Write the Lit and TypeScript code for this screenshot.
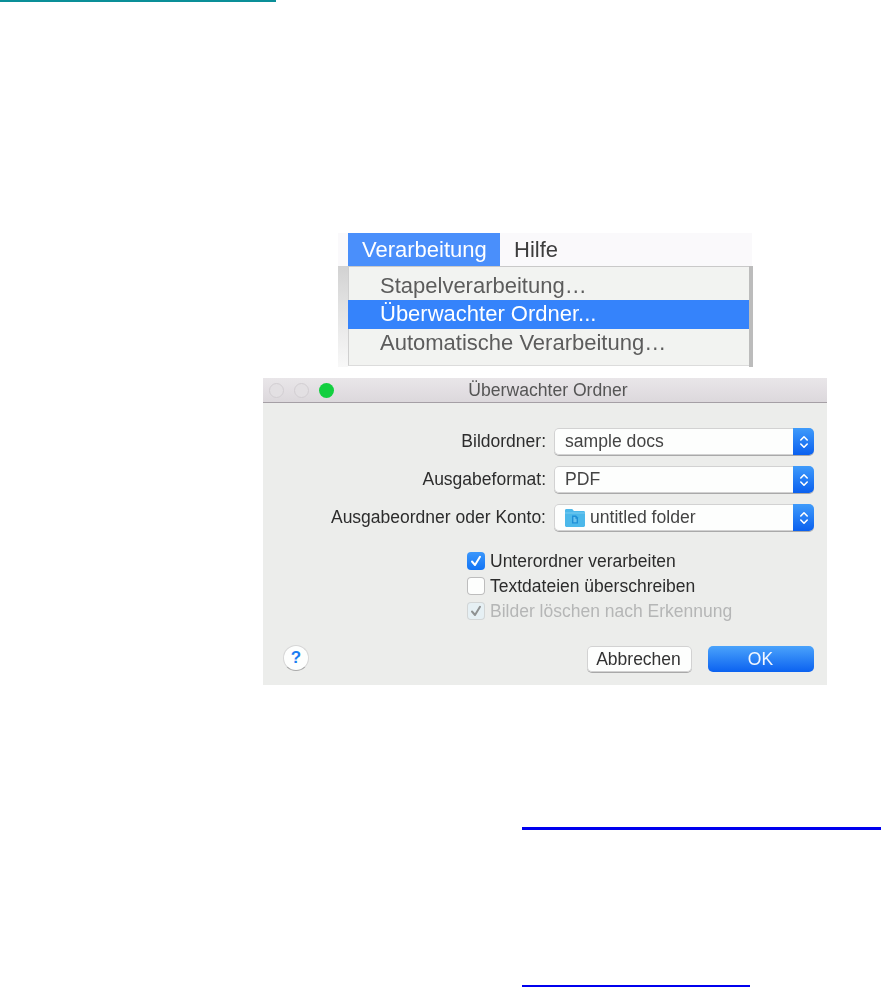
import { LitElement, html, css } from "lit";
import { customElement } from "lit/decorators.js";

const stepper = html`<svg class="stepper-icon" viewBox="0 0 10 16" width="10" height="16" aria-hidden="true"><path d="M1.8 6 5 2.8 8.2 6M1.8 10 5 13.2 8.2 10" fill="none" stroke="#fff" stroke-width="1.6" stroke-linecap="round" stroke-linejoin="round"/></svg>`;
const check = (stroke: string) => html`<svg viewBox="0 0 18 18" width="18" height="18" aria-hidden="true"><path d="M5 9.5 8 13 13 4.8" fill="none" stroke="${stroke}" stroke-width="2" stroke-linecap="round" stroke-linejoin="round"/></svg>`;
const folder = html`<svg class="folder" viewBox="0 0 20 18" width="20" height="18" aria-hidden="true"><path d="M0 1.5C0 .7.5 0 1.3 0h5.4c.6 0 1 .3 1.3.8L8.8 2h9.8c.8 0 1.4.6 1.4 1.4v13.2c0 .8-.6 1.4-1.4 1.4H1.4C.6 18 0 17.4 0 16.6Z" fill="#4cb8ea"/><path d="M0 4h20" stroke="#86d2f4" stroke-width=".8"/><path d="M7 6.5h4l2 2v6H7Z" fill="#1f8fd6"/><path d="M8.4 8h2v1.8h1.2v3.4H8.4Z" fill="#6cc4ee"/></svg>`;

@customElement("app-root")
export class AppRoot extends LitElement {
  static styles = css`
    :host { display: block; width: 881px; height: 987px; overflow: hidden; background: #fff; font-family: "Liberation Sans", Arial, sans-serif; }
    .rule-top { width: 276px; height: 2px; background: #0a8f98; }
    .menu { width: 415px; height: 134px; margin: 231px 0 0 338px; background: #fff; overflow: hidden; }
    .menubar { height: 33px; margin-right: 1px; padding-left: 10px; display: flex; background: #faf9fb; font-size: 22px; color: #3d3d3d; }
    .mb-item { display: flex; align-items: center; padding: 0 14px; height: 33px; }
    .mb-item.active { width: 152px; box-sizing: border-box; background: #4a8ffb; color: #fff; }
    .mb-item span, .li span, .title-text, .lbl, .popup-val span, .chk span, .btn span { filter: blur(.35px); }
    .menu-main { display: flex; height: 101px; }
    .side-l { width: 10px; background: linear-gradient(#d2d2d2, #e4e4e4 45%, #f8f8f8); }
    .side-r { width: 4px; background: #bcbcbc; }
    .list { flex: 1; height: 100px; background: #f2f3f1; border-top: 1px solid #c9c9c9; border-left: 1px solid #cfcfcf; border-bottom: 1px solid #dcdcdc; box-sizing: border-box; padding-top: 4.5px; font-size: 22px; color: #5c5c5c; }
    .li { height: 28.5px; padding-left: 32px; margin-left: -1px; display: flex; align-items: center; }
    .li.sel { background: #3583fb; color: #fff; }

    .dialog { width: 564px; height: 307px; margin: 11px 0 0 263px; background: #ecedeb; color: #2c2c2c; font-size: 17.5px; display: flex; flex-direction: column; }
    .title { height: 25px; box-sizing: border-box; flex: none; display: grid; grid-template-columns: 1fr auto 1fr; align-items: center; padding: 0 6px; background: linear-gradient(#e9e6e9, #dcd8dc); border-bottom: 1px solid #a59fa5; color: #555; }
    .lights { display: flex; gap: 10px; }
    .light { width: 15px; height: 15px; border-radius: 50%; box-sizing: border-box; border: 1px solid #d2ced2; background: #e3e0e3; }
    .light.on { border: 0; background: #12cf3f; }
    .title-text { font-size: 17.6px; padding-left: 6px; }
    .fields { margin-top: 25px; display: grid; grid-template-columns: 283px 260px; column-gap: 8px; row-gap: 11px; }
    .lbl { text-align: right; line-height: 27px; }
    .popup { height: 27px; box-sizing: border-box; display: flex; align-items: stretch; background: #fdfefd; border-radius: 5px; box-shadow: inset 0 0 0 1px #d2d2d2, 0 1px 0 #a9a9a9; overflow: hidden; color: #444; font-size: 17.6px; }
    .popup-val { flex: 1; display: flex; align-items: center; gap: 5px; padding-left: 11px; }
    .stepper { width: 21px; display: flex; align-items: center; justify-content: center; background: linear-gradient(#3f9bfb, #0a60ef); }
    .checks { margin: 21px 0 0 204px; display: flex; flex-direction: column; gap: 7px; }
    .chk { display: flex; align-items: center; gap: 5px; height: 18px; }
    .box { width: 18px; height: 18px; box-sizing: border-box; border-radius: 4px; background: #fdfefd; box-shadow: inset 0 0 0 1px #bdbdbd; }
    .box.on { background: linear-gradient(#3b97fb, #1274f5); box-shadow: none; }
    .box.dis { background: #e6f0f4; box-shadow: inset 0 0 0 1px #d3d6d6; }
    .chk.disabled { color: #b5b6b6; }
    .footer { margin-top: 26px; display: flex; align-items: flex-start; padding: 0 13px 0 20px; }
    .help { width: 26px; height: 26px; margin-top: -1px; box-sizing: border-box; border-radius: 50%; background: #fdfefd; border: 1px solid #d6d6d6; border-bottom-color: #a9a9a9; color: #1a7cf2; font-size: 17px; font-weight: bold; display: flex; align-items: center; justify-content: center; }
    .spacer { flex: 1; }
    .btn { height: 26px; box-sizing: border-box; border-radius: 5px; display: flex; align-items: center; justify-content: center; }
    .cancel { width: 105px; margin-right: 16px; padding-right: 2px; background: #fdfefd; box-shadow: inset 0 0 0 1px #d2d2d2, 0 1px 0 #a9a9a9; color: #333; }
    .ok { width: 106px; padding-right: 1px; background: linear-gradient(#4aa3fb, #0b62f0); color: #f2f7ff; }
    .rule-link { background: #0000ee; margin-left: 522px; }
    .rule-a { width: 359px; height: 3px; margin-top: 142px; }
    .rule-b { width: 228px; height: 2px; margin-top: 155px; }
  `;

  render() {
    const fields: [string, unknown, string][] = [
      ["Bildordner:", "", "sample docs"],
      ["Ausgabeformat:", "", "PDF"],
      ["Ausgabeordner oder Konto:", folder, "untitled folder"],
    ];
    return html`
      <div class="rule-top"></div>
      <div class="menu">
        <div class="menubar">
          <div class="mb-item active"><span>Verarbeitung</span></div>
          <div class="mb-item"><span>Hilfe</span></div>
        </div>
        <div class="menu-main">
          <div class="side-l"></div>
          <div class="list">
            <div class="li"><span>Stapelverarbeitung…</span></div>
            <div class="li sel"><span>Überwachter Ordner...</span></div>
            <div class="li"><span>Automatische Verarbeitung…</span></div>
          </div>
          <div class="side-r"></div>
        </div>
      </div>
      <div class="dialog">
        <div class="title">
          <div class="lights"><i class="light"></i><i class="light"></i><i class="light on"></i></div>
          <div class="title-text">Überwachter Ordner</div>
        </div>
        <div class="fields">
          ${fields.map(([l, ic, v]) => html`
            <div class="lbl">${l}</div>
            <div class="popup"><div class="popup-val">${ic}<span>${v}</span></div><div class="stepper">${stepper}</div></div>
          `)}
        </div>
        <div class="checks">
          <div class="chk"><div class="box on">${check("#fff")}</div><span>Unterordner verarbeiten</span></div>
          <div class="chk"><div class="box"></div><span>Textdateien überschreiben</span></div>
          <div class="chk disabled"><div class="box dis">${check("#8f9292")}</div><span>Bilder löschen nach Erkennung</span></div>
        </div>
        <div class="footer">
          <div class="help">?</div>
          <div class="spacer"></div>
          <div class="btn cancel"><span>Abbrechen</span></div>
          <div class="btn ok"><span>OK</span></div>
        </div>
      </div>
      <div class="rule-link rule-a"></div>
      <div class="rule-link rule-b"></div>
    `;
  }
}
